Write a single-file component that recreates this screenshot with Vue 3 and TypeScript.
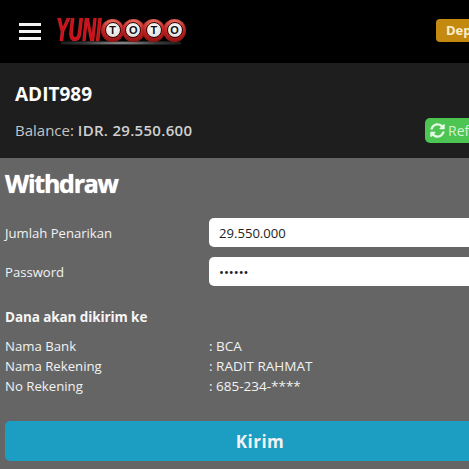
<script setup lang="ts">
const balls = ['T', 'O', 'T', 'O']

const details = [
  { label: 'Nama Bank', value: ': BCA' },
  { label: 'Nama Rekening', value: ': RADIT RAHMAT' },
  { label: 'No Rekening', value: ': 685-234-****' },
]
</script>

<template>
  <div class="page">
    <header class="topbar">
      <button class="burger" aria-label="Menu">
        <span></span>
        <span></span>
        <span></span>
      </button>
      <div class="logo">
        <span class="logo-glow"></span>
        <span class="logo-name">YUNI</span>
        <span v-for="(ball, i) in balls" :key="i" class="ball">
          <span class="ball-face">{{ ball }}</span>
        </span>
      </div>
      <a class="deposit">Deposit</a>
    </header>

    <section class="account">
      <div class="username">ADIT989</div>
      <div class="balance-row">
        <div class="balance">Balance: <b>IDR. 29.550.600</b></div>
        <button class="refresh">
          <svg viewBox="0 0 512 512" width="15" height="15">
            <path
              fill="#e6f7e6"
              d="M370.7 133.3C339.5 104 298.9 88 255.800 88c-77.500.1-144.300 53.200-162.800 126.900-1.300 5.400-6.100 9.200-11.700 9.200H24.100c-7.500 0-13.200-6.800-11.800-14.200C33.900 94.900 134.800 8 256 8c66.500 0 126.800 26.100 171.300 68.700L463 41c15.100-15.100 41-4.400 41 17v134c0 13.300-10.700 24-24 24H346c-21.400 0-32.100-25.900-17-41l41.700-41.700zM32 296h134c21.400 0 32.100 25.900 17 41l-41.700 41.700c31.200 29.300 71.800 45.300 114.900 45.300 77.400-.1 144.300-53.100 162.800-126.800 1.300-5.400 6.100-9.200 11.700-9.200h57.300c7.500 0 13.200 6.800 11.800 14.200C478.100 417.100 377.200 504 256 504c-66.500 0-126.800-26.100-171.300-68.700L49 471c-15.100 15.100-41 4.400-41-17V320c0-13.300 10.700-24 24-24z"
            />
          </svg>
          Refresh
        </button>
      </div>
    </section>

    <main class="content">
      <h1 class="title">Withdraw</h1>

      <form class="form" @submit.prevent>
        <div class="field">
          <label for="amount">Jumlah Penarikan</label>
          <input id="amount" type="text" value="29.550.000" />
        </div>
        <div class="field">
          <label for="password">Password</label>
          <input id="password" type="password" value="123456" />
        </div>

        <h2 class="subtitle">Dana akan dikirim ke</h2>

        <div class="details">
          <div v-for="item in details" :key="item.label" class="detail">
            <span class="detail-label">{{ item.label }}</span>
            <span>{{ item.value }}</span>
          </div>
        </div>

        <button class="submit" type="submit">Kirim</button>
      </form>
    </main>
  </div>
</template>

<style>
html,
body {
  margin: 0;
  overflow: hidden;
  background: #656565;
}
</style>

<style scoped>
.page {
  width: 520px;
  font-family: 'Open Sans', 'Noto Sans', sans-serif;
  color: #fff;
}

.topbar {
  height: 63px;
  background: #000;
  display: flex;
  align-items: center;
  padding-left: 19px;
  box-sizing: border-box;
}

.burger {
  flex: none;
  width: 22px;
  height: 17px;
  padding: 0;
  border: 0;
  background: none;
  display: flex;
  flex-direction: column;
  justify-content: space-between;
  margin-right: 15px;
}

.burger span {
  display: block;
  height: 3px;
  background: #f4f4f4;
}

.logo {
  position: relative;
  flex: none;
  display: flex;
  align-items: center;
  width: 130px;
  height: 28px;
  margin-bottom: 3px;
}

.logo-name {
  display: block;
  flex: none;
  width: 45px;
  font-family: 'Liberation Sans', sans-serif;
  font-size: 33px;
  font-weight: 700;
  font-style: italic;
  line-height: 28px;
  white-space: nowrap;
  color: #cc1019;
  transform: scaleX(0.57);
  transform-origin: left center;
  text-shadow: 0 0 1px #ff5a50;
}

.ball {
  position: relative;
  width: 23px;
  height: 23px;
  flex: none;
  margin-right: -2.3px;
  border-radius: 50%;
  background: radial-gradient(circle at 50% 25%, #f58a78, #bb2020 55%, #6f0c0c);
  display: flex;
  align-items: center;
  justify-content: center;
}

.ball-face {
  width: 14px;
  height: 14px;
  border-radius: 50%;
  border: 1px solid #300;
  background: radial-gradient(circle at 50% 40%, #fff, #d4d4d4);
  color: #111;
  font-family: 'Liberation Sans', sans-serif;
  font-size: 11px;
  font-weight: 700;
  line-height: 14px;
  text-align: center;
}

.logo-glow {
  position: absolute;
  left: 5px;
  top: 25px;
  width: 120px;
  height: 4px;
  background: radial-gradient(ellipse at 50% 50%, #eee 0, #888 14%, #3a3a3a 45%, transparent 100%);
}

.deposit {
  flex: none;
  margin-left: 250px;
  width: 100px;
  height: 23px;
  border-radius: 4px;
  background: #c48a10;
  color: #fbeccb;
  font-size: 13px;
  font-weight: 700;
  line-height: 23px;
  padding-left: 10px;
  box-sizing: border-box;
  margin-bottom: 3px;
}

.account {
  height: 95px;
  background: #1e1e1e;
  padding: 19px 0 0 15px;
  box-sizing: border-box;
}

.username {
  font-size: 19px;
  font-weight: 700;
  line-height: 24px;
}

.balance-row {
  display: flex;
  align-items: center;
  margin-top: 12px;
}

.balance {
  width: 410px;
  font-size: 15px;
  line-height: 25px;
  color: #c4c4c4;
}

.balance b {
  font-size: 15px;
  font-weight: 600;
  letter-spacing: 0.3px;
  color: #d0d0d0;
}

.refresh {
  width: 90px;
  height: 25px;
  flex: none;
  display: flex;
  align-items: center;
  gap: 3px;
  padding: 0 0 0 5px;
  border: 0;
  border-radius: 5px;
  background: #4cc552;
  color: #d5f2d6;
  font-family: inherit;
  font-size: 14px;
}

.content {
  height: 320px;
  background: #656565;
  padding: 0 5px;
  box-sizing: border-box;
}

.title {
  margin: 0;
  padding-top: 8px;
  font-size: 25px;
  font-weight: 700;
  letter-spacing: -1.250px;
  line-height: 34px;
  text-shadow: 0 0 1px #fff;
}

.form {
  padding-top: 18px;
}

.field {
  display: flex;
  align-items: center;
  height: 29px;
  margin-bottom: 10px;
}

.field label {
  width: 204px;
  flex: none;
  font-size: 13.100px;
  color: #f2f2f2;
}

.field input {
  flex: 1;
  min-width: 0;
  height: 29px;
  border: 0;
  border-radius: 5px;
  padding: 0 10px;
  box-sizing: border-box;
  background: #fff;
  color: #222;
  font-family: inherit;
  font-size: 13.100px;
  outline: none;
}

.subtitle {
  margin: 21px 0 0;
  font-size: 13.500px;
  font-weight: 700;
  letter-spacing: -0.1px;
  line-height: 20px;
  color: #f6f6f6;
}

.details {
  margin-top: 9px;
}

.detail {
  display: flex;
  font-size: 13.500px;
  line-height: 20px;
  color: #f2f2f2;
}

.detail-label {
  width: 204px;
  flex: none;
  font-size: 13.200px;
}

.submit {
  display: block;
  width: 100%;
  height: 40px;
  margin-top: 25px;
  border: 0;
  border-radius: 5px;
  background: #1c9dc2;
  color: #f2f2f2;
  font-family: inherit;
  font-size: 17px;
  font-weight: 700;
  letter-spacing: 0.5px;
}
</style>
